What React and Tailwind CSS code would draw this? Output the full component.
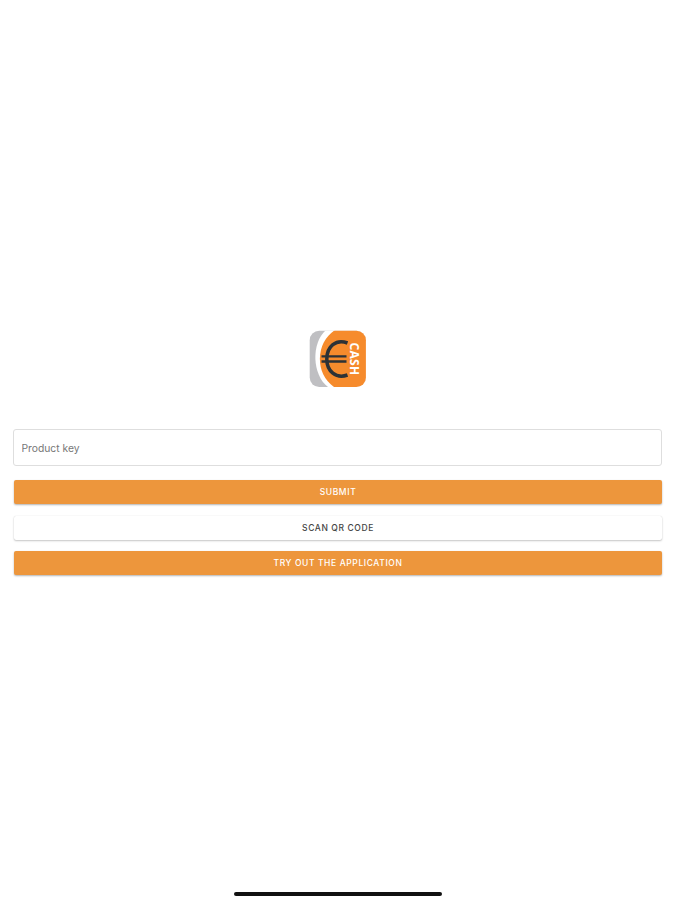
import { useState } from "react";
import clsx from "clsx";

function Logo() {
  return (
    <svg
      className="h-[57px] w-[57px]"
      viewBox="0 0 57 57"
      role="img"
      aria-label="Cash"
    >
      <defs>
        <clipPath id="logo-shape">
          <rect x="0.7" y="0.8" width="56.200" height="56.200" rx="9.500" />
        </clipPath>
      </defs>
      <g clipPath="url(#logo-shape)">
        <rect width="57" height="57" fill="#bfbfc2" />
        <path d="M17 0C2 13 3 45 19 57H57V0Z" fill="#ffffff" />
        <path d="M26 0C6 13 6 44 25 57H57V0Z" fill="#f68b2c" />
      </g>
      <path
        d="M38.500 13C27 8.500 17.800 16.500 17.800 29S27 49 38.500 45"
        fill="none"
        stroke="#2d3236"
        strokeWidth="3.500"
      />
      <path
        d="M12.500 26.300H37.500M12.500 31.500H37.500"
        stroke="#2d3236"
        strokeWidth="2.300"
      />
      <text
        transform="translate(41.300 12.600) rotate(90)"
        fill="#ffffff"
        fontFamily="Open Sans, sans-serif"
        fontSize="12"
        fontWeight="700"
        textLength="32.500"
      >
        CASH
      </text>
    </svg>
  );
}

function Button({ variant = "primary", children, ...props }) {
  return (
    <button
      type="button"
      className={clsx(
        "h-6 w-full rounded-[2px] pl-px text-[8.500px] leading-[25px] font-medium tracking-[0.6px] uppercase",
        variant === "primary" &&
          "bg-[#ed963c] text-white shadow-[0_1px_2px_rgba(0,0,0,0.3)]",
        variant === "plain" &&
          "bg-white text-[#444444] shadow-[0_1px_2px_rgba(0,0,0,0.22),0_0_1px_rgba(0,0,0,0.15)]"
      )}
      {...props}
    >
      {children}
    </button>
  );
}

export default function App() {
  const [productKey, setProductKey] = useState("");

  return (
    <div className="flex h-screen flex-col overflow-hidden bg-white px-[13px] font-['Inter',sans-serif]">
      <div className="flex justify-center pt-[330px]">
        <Logo />
      </div>

      <form className="mt-[42px] flex flex-col" onSubmit={(e) => e.preventDefault()}>
        <input
          type="text"
          value={productKey}
          onChange={(e) => setProductKey(e.target.value)}
          placeholder="Product key"
          className="h-[37px] w-full rounded-[3px] border border-[#dedede] px-2 pt-px pl-[7.500px] text-[10.300px] text-[#333333] outline-none placeholder:text-[#777777]"
        />
        <div className="mt-3.5 flex flex-col gap-[11.500px] px-[0.5px]">
          <Button>Submit</Button>
          <Button variant="plain">Scan QR code</Button>
          <Button>Try out the application</Button>
        </div>
      </form>

      <div className="mt-auto mb-[4.500px] h-[3.500px] w-[208px] self-center rounded-full bg-[#111111]" />
    </div>
  );
}
